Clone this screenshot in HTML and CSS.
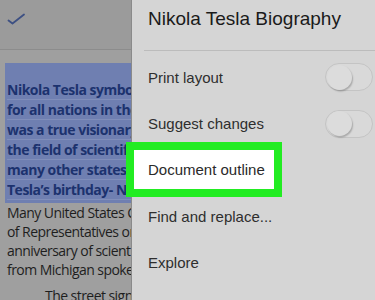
FILE: index.html
```html
<!DOCTYPE html>
<html>
<head>
<meta charset="utf-8">
<link rel="stylesheet" href="styles.css">
</head>
<body>
<div class="screen">
  <div class="doc">
    <div class="toolbar">
      <svg class="check" width="20" height="16" viewBox="0 0 20 16"><path d="M1.5 8.5 L5.5 11.5 L17 2.5" fill="none" stroke="#3d5083" stroke-width="1.8" stroke-linecap="round" stroke-linejoin="round"/></svg>
    </div>
    <div class="page">
      <div class="selection">
        <div class="sline">Nikola Tesla symbolizes</div>
        <div class="sline">for all nations in the world</div>
        <div class="sline">was a true visionary who</div>
        <div class="sline">the field of scientific study</div>
        <div class="sline">many other states celebrate</div>
        <div class="sline">Tesla’s birthday- Nikola</div>
      </div>
      <div class="para">
        <div class="line">Many United States Congress</div>
        <div class="line">of Representatives on the</div>
        <div class="line">anniversary of scientist</div>
        <div class="line">from Michigan spoke about</div>
      </div>
      <div class="para indent">
        <div class="line">The street sign</div>
      </div>
    </div>
  </div>
  <div class="drawer">
    <div class="title">Nikola Tesla Biography</div>
    <div class="sep"></div>
    <div class="item"><span class="label">Print layout</span><span class="toggle"><span class="knob"></span></span></div>
    <div class="item"><span class="label">Suggest changes</span><span class="toggle"><span class="knob"></span></span></div>
    <div class="item"><span class="highlight">Document outline</span></div>
    <div class="item"><span class="label">Find and replace...</span></div>
    <div class="item"><span class="label">Explore</span></div>
  </div>
</div>
</body>
</html>
```
FILE: styles.css
```css
* { box-sizing: border-box; }
html, body { margin: 0; padding: 0; }
body { width: 375px; height: 300px; overflow: hidden; background: #9b9b9b; }
.screen { display: flex; width: 375px; height: 300px; }
.doc { width: 132px; flex: none; overflow: hidden; background: #9b9b9b; }
.toolbar { height: 50px; border-bottom: 1px solid #8c8c8c; padding: 12px 0 0 7px; }
.check { display: block; }
.page { padding: 13px 0 0 5px; background: #9f9f9f; height: 250px; white-space: nowrap;
  font-family: "Open Sans", "DejaVu Sans", sans-serif; }
.selection { background: #6f7fb1; padding: 17px 0 3px 2px; width: 140px; }
.sline { height: 20px; line-height: 20px; font-size: 14px; font-weight: 700; color: #1c326e;
  border-bottom: 1px solid rgba(255,255,255,0.12); letter-spacing: -0.5px; }
.para { padding-left: 2px; }
.line { height: 19px; line-height: 19px; font-size: 14px; color: #1e1e1e; letter-spacing: -0.55px; }
.indent { margin-top: 6.5px; padding-left: 40px; }
.drawer { flex: 1; background: #d5d5d5; box-shadow: -1px 0 0 #8a8a8a; padding-left: 16px;
  font-family: "Liberation Sans", Arial, sans-serif; }
.title { padding-top: 6px; height: 50px; font-size: 19px; line-height: 25px; color: #1a1a1a; }
.sep { height: 1px; background: #bcbcbc; margin-left: -4px; }
.item { height: 46.4px; display: flex; align-items: center; justify-content: space-between;
  font-size: 15px; color: #2e2e2e; padding-right: 2px; }
.sep + .item { margin-top: 3px; }
.toggle { width: 48px; height: 28px; border-radius: 14px; border: 1.5px solid #c4c4c4;
  background: #d9d9d9; display: flex; align-items: center; padding-left: 1px; }
.knob { width: 25px; height: 25px; border-radius: 50%; background: #dcdcdc;
  box-shadow: 1px 1.5px 1.5px rgba(0,0,0,0.22); }
.highlight { margin-left: -22px; border: 8px solid #22ec22; background: #ffffff;
  height: 55px; display: flex; align-items: center; padding: 0 9px 0 14px; color: #2a2a2a; }
```
